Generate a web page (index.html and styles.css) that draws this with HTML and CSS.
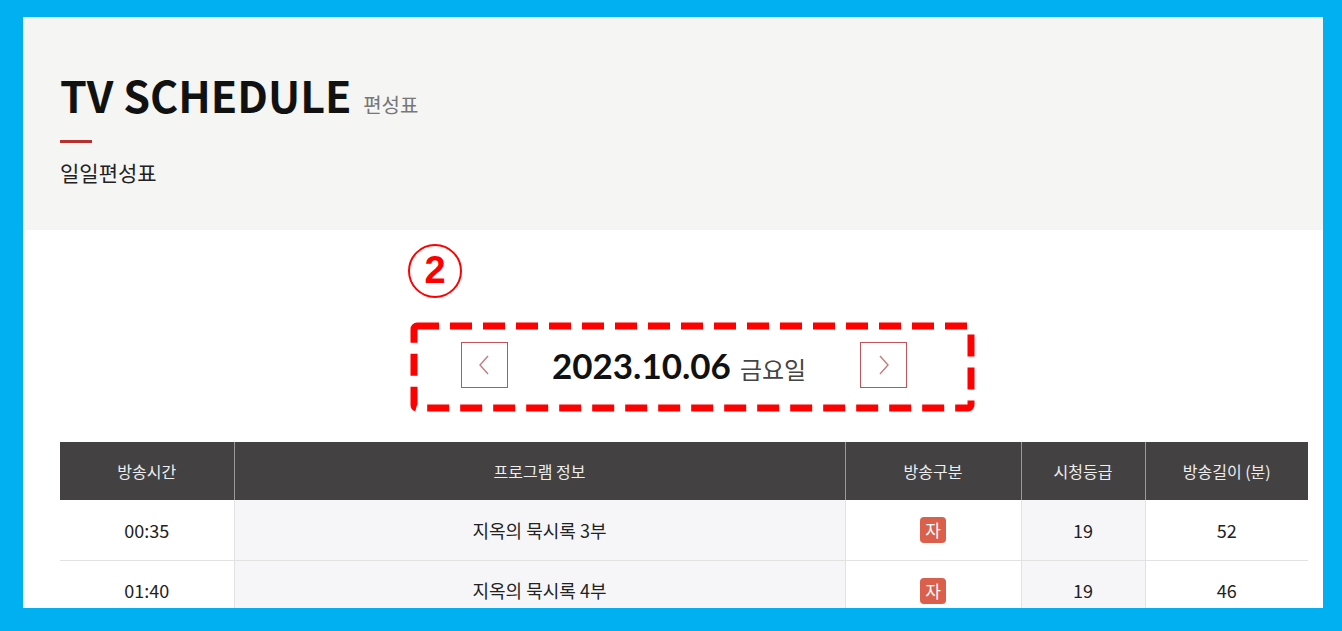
FILE: index.html
```html
<!DOCTYPE html>
<html>
<head>
  <meta charset="utf-8">
  <link rel="stylesheet" href="styles.css">
</head>
<body>
  <div class="page">
    <!-- Title area -->
    <div class="page-head">
      <h1 class="title">TV SCHEDULE <span class="title-sub">편성표</span></h1>
      <div class="title-bar"></div>
      <p class="title-menu">일일편성표</p>
    </div>

    <div class="content">
      <div class="step-mark">2</div>

      <!-- Date navigation -->
      <div class="date-wrap">
        <div class="date-nav">
          <svg class="mark-box" width="565" height="90" viewBox="0 0 565 90">
            <rect x="4" y="4" width="557" height="82" fill="none" stroke="#f00" stroke-width="7" stroke-dasharray="22 11" rx="3"/>
          </svg>
          <button class="nav-btn">
            <svg width="14" height="22" viewBox="0 0 14 22"><path d="M11 2 L3 11 L11 20" fill="none" stroke="#c87a80" stroke-width="1.4"/></svg>
          </button>
          <div class="date-text"><strong>2023.10.06</strong> <span>금요일</span></div>
          <button class="nav-btn">
            <svg width="14" height="22" viewBox="0 0 14 22"><path d="M3 2 L11 11 L3 20" fill="none" stroke="#c87a80" stroke-width="1.4"/></svg>
          </button>
        </div>
      </div>

      <!-- Schedule table -->
      <table class="schedule">
        <thead>
          <tr>
            <th class="c-time">방송시간</th>
            <th class="c-prog">프로그램 정보</th>
            <th class="c-type">방송구분</th>
            <th class="c-rate">시청등급</th>
            <th class="c-len">방송길이 (분)</th>
          </tr>
        </thead>
        <tbody>
          <tr>
            <td>00:35</td>
            <td class="shade">지옥의 묵시록 3부</td>
            <td><span class="badge">자</span></td>
            <td class="shade">19</td>
            <td>52</td>
          </tr>
          <tr>
            <td>01:40</td>
            <td class="shade">지옥의 묵시록 4부</td>
            <td><span class="badge">자</span></td>
            <td class="shade">19</td>
            <td>46</td>
          </tr>
        </tbody>
      </table>
    </div>
  </div>
</body>
</html>
```

FILE: styles.css
```css
* {
  box-sizing: border-box;
  margin: 0;
  padding: 0;
}

body {
  background: #00b0f0;
  font-family: 'Noto Sans CJK KR', sans-serif;
  color: #222;
}

.page {
  margin: 17px 19px 0 23px;
  height: 591px;
  background: #fff;
  overflow: hidden;
}

/* Title area */
.page-head {
  background: #f5f5f3;
  height: 213px;
  padding: 47px 37px 0;
}

.title {
  font-size: 43px;
  font-weight: 700;
  line-height: 60px;
  color: #111;
}

.title-sub {
  font-size: 20px;
  font-weight: 400;
  line-height: 1;
  color: #777;
  margin-left: 2px;
}

.title-bar {
  width: 32px;
  height: 3px;
  background: #b8302e;
  margin-top: 16px;
}

.title-menu {
  font-size: 21px;
  line-height: 28px;
  margin-top: 15px;
  color: #222;
}

/* Content */
.content {
  padding: 0 15px 0 37px;
  position: relative;
}

.step-mark {
  position: absolute;
  left: 385px;
  top: 14px;
  width: 54px;
  height: 54px;
  border: 2px solid #f00;
  border-radius: 50%;
  color: #f00;
  font-family: 'Liberation Sans', sans-serif;
  font-weight: 700;
  font-size: 38px;
  line-height: 49px;
  text-align: center;
}

.date-wrap {
  display: flex;
  justify-content: center;
  padding: 112px 0 54px;
}

.date-nav {
  display: flex;
  align-items: center;
  gap: 44px;
  position: relative;
}

.mark-box {
  position: absolute;
  left: -51px;
  top: -20px;
}

.nav-btn {
  width: 47px;
  height: 46px;
  border: 1px solid #c0545a;
  background: #fff;
  display: flex;
  align-items: center;
  justify-content: center;
  position: relative;
}

.date-text {
  font-family: 'Lato', 'Noto Sans CJK KR', sans-serif;
  font-size: 35px;
  color: #111;
  white-space: nowrap;
  padding-right: 10px;
}

.date-text strong {
  font-weight: 700;
}

.date-text span {
  font-family: 'Noto Sans CJK KR', sans-serif;
  font-size: 24px;
  color: #444;
}

/* Table */
.schedule {
  width: 1248px;
  border-collapse: collapse;
  table-layout: fixed;
}

.schedule th {
  background: #434141;
  color: #eee;
  font-weight: 400;
  font-size: 16px;
  height: 58px;
  border-left: 1px solid #9a9a9a;
}

.schedule th:first-child {
  border-left: none;
}

.c-time { width: 174px; }
.c-prog { width: 611px; }
.c-type { width: 176px; }
.c-rate { width: 124px; }
.c-len { width: 163px; }

.schedule td {
  height: 60px;
  text-align: center;
  font-size: 18px;
  color: #222;
  border-bottom: 1px solid #e2e2e2;
  border-left: 1px solid #e2e2e2;
}

.schedule td:first-child {
  border-left: none;
}

.schedule td.shade {
  background: #f6f6f8;
}

.badge {
  display: inline-block;
  width: 26px;
  height: 26px;
  line-height: 26px;
  background: #da604b;
  color: #fff;
  border-radius: 4px;
  font-size: 17px;
}
```
